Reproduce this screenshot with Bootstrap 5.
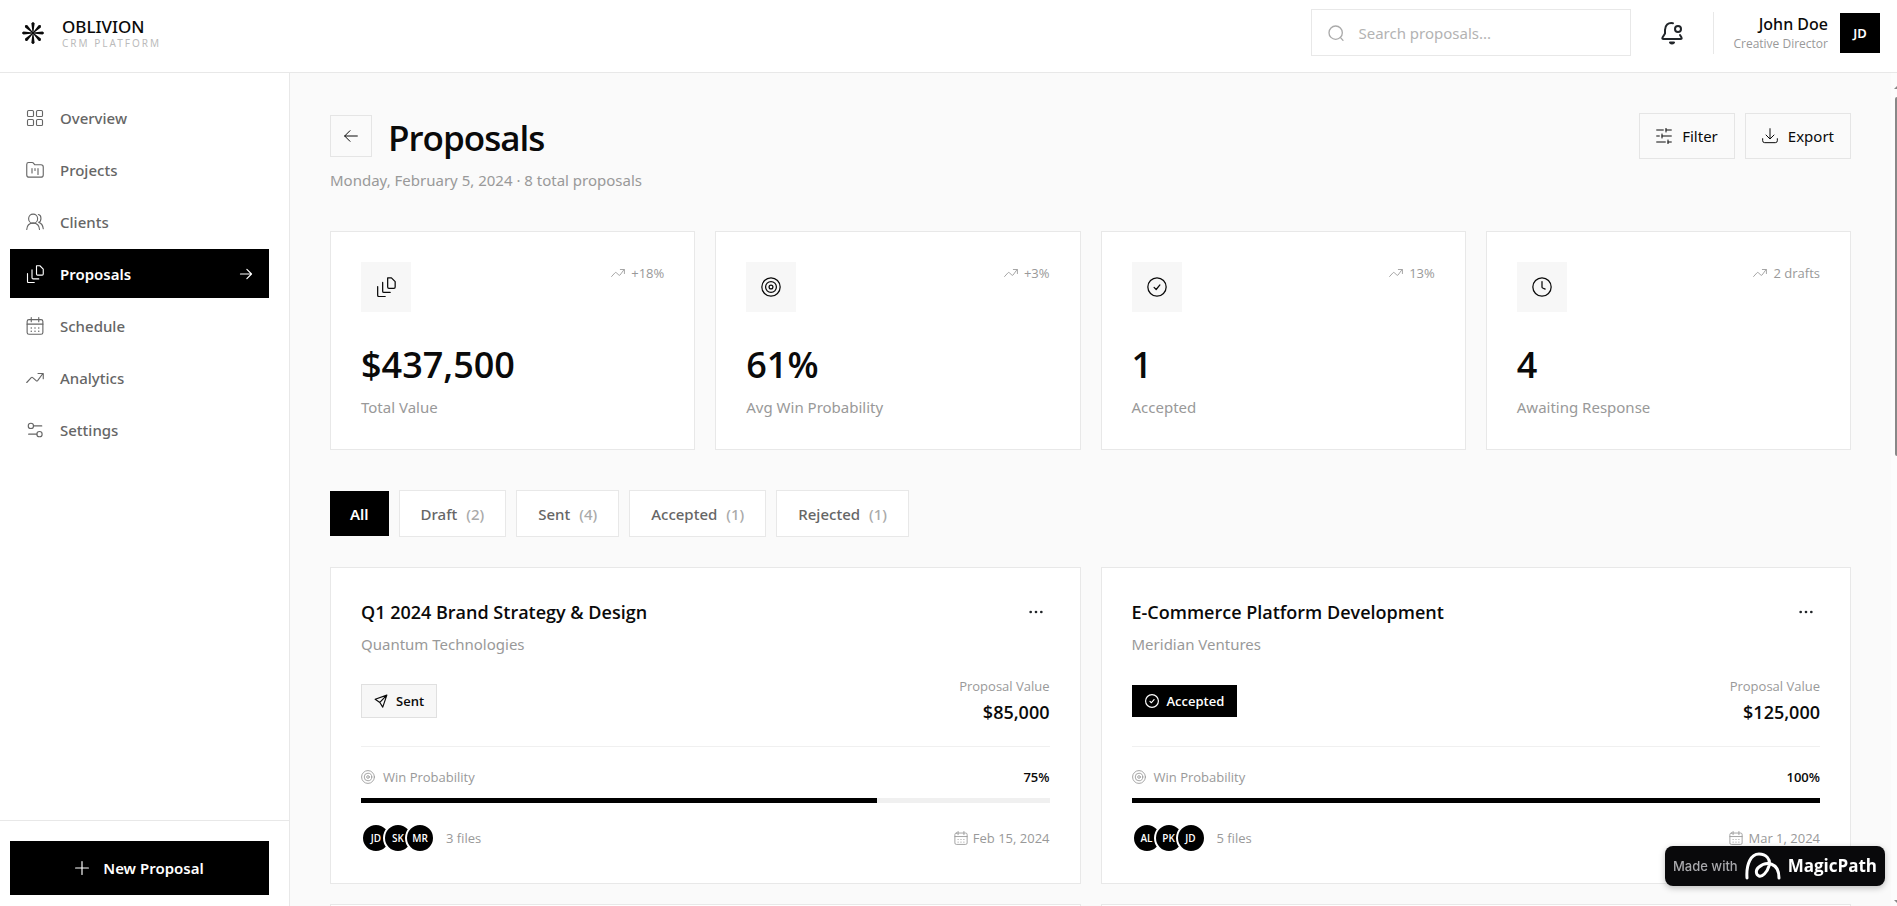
<!DOCTYPE html>
<html lang="en">
<head>
<meta charset="utf-8">
<meta name="viewport" content="width=device-width, initial-scale=1">
<title>Oblivion CRM – Proposals</title>
<link href="https://cdn.jsdelivr.net/npm/bootstrap@5.3.0/dist/css/bootstrap.min.css" rel="stylesheet">
<style>
  :root { --line: #e8e8e8; --soft: #f7f7f7; --muted: #999; --dim: #666; --ink: #0a0a0a; }
  body { font-family: "Noto Sans", "Open Sans", sans-serif; font-size: 15px; line-height: 24px; color: var(--ink); background: #fff; }
  svg { fill: none; stroke: currentColor; stroke-width: 1.5; stroke-linecap: round; stroke-linejoin: round; flex-shrink: 0; }
  .btn { --bs-btn-border-radius: 0; --bs-btn-font-size: 15px; --bs-btn-line-height: 24px; }
  .i14 { width: 14px; height: 14px; } .i16 { width: 16px; height: 16px; } .i18 { width: 18px; height: 18px; }
  .i20 { width: 20px; height: 20px; } .i24 { width: 24px; height: 24px; }
  .bold-line { stroke-width: 2; }
  .txt-muted { color: var(--muted); }
  .txt-small { font-family: "Open Sans", sans-serif; font-size: 13px; line-height: 20px; }
  .topbar { border-bottom: 1px solid var(--line); padding: 9px 17px 16px 21px; }
  .brand { color: inherit; text-decoration: none; gap: 17px; }
  .brand-name { font-size: 17px; line-height: 20px; font-weight: 500; }
  .brand-sub { font-size: 10px; line-height: 12px; letter-spacing: 2px; color: #bbb; }
  .search-box { width: 320px; height: 47px; border: 1px solid var(--line); padding: 0 16px; gap: 12px; color: #aaa; }
  .search-box input { border: 0; outline: 0; background: none; min-width: 0; }
  .search-box input::placeholder { color: #b3b3b3; }
  .btn-bell { width: 40px; height: 40px; margin: 0 21px; padding: 0; border: 0; }
  .user-area { border-left: 1px solid var(--line); padding-left: 19px; height: 42px; gap: 12px; }
  .user-name { font-size: 16px; line-height: 22px; font-weight: 500; }
  .user-role { font-family: "Open Sans", sans-serif; font-size: 12px; line-height: 18px; }
  .user-pic { width: 40px; height: 40px; background: #000; color: #fff; font-size: 13px; font-weight: 600; }
  .side { width: 290px; border-right: 1px solid var(--line); }
  .side-nav { padding: 20px 20px 0 10px; gap: 3px; }
  .side-link { height: 49px; padding: 0 16px; gap: 16px; color: var(--dim); font-weight: 500; text-decoration: none; }
  .side-link.active { background: #000; color: #fff; font-weight: 600; }
  .side-foot { border-top: 1px solid var(--line); padding: 20px 20px 11px 10px; }
  .btn-new, .btn-new:hover { height: 54px; background: #000; color: #fff; font-weight: 600; gap: 14px; }
  .page { background: #fafafa; padding: 40px 40px 0; }
  .track { width: 6px; background: #fcfcfc; padding: 13px 0 3px 3px; color: #888; }
  .track svg { stroke: none; fill: currentColor; }
  .thumb { height: 359px; width: 2px; margin: 8px 0 auto 1px; background: #888; border-radius: 2px 0 0 2px; }
  .btn-line { border: 1px solid #e5e5e5; color: var(--ink); background: #fafafa; height: 46px; padding: 0 16px; gap: 10px; }
  .btn-back { width: 42px; height: 42px; padding: 0; margin-top: 2px; }
  .gap-ten { gap: 10px; }
  h1, .figure-num, .deal h2, .deal-value { font-family: "Open Sans", sans-serif; font-weight: 600; }
  h1 { font-size: 35px; line-height: 50px; letter-spacing: -1px; }
  .page-sub { margin: 5px 0 0; }
  .panel { background: #fff; border: 1px solid var(--line); padding: 30px; }
  .grid-stats { display: grid; grid-template-columns: repeat(4, 1fr); gap: 20px; margin: 39px 0 40px; }
  .grid-cards { display: grid; grid-template-columns: 1fr 1fr; gap: 20px; margin-top: 30px; }
  .tile { width: 50px; height: 50px; background: var(--soft); }
  .trend { gap: 6px; margin-top: 1px; }
  .figure-num { font-size: 36px; line-height: 44px; margin: 31px 0 8px; }
  .tab { height: 47px; padding: 0 21px; border: 1px solid var(--line); background: #fff; color: var(--dim); font-weight: 500; gap: 9px; }
  .tab.active { background: #000; color: #fff; border: 0; height: 45px; padding: 0 20px; font-weight: 600; }
  .tab span { color: #aaa; }
  .deal h2 { font-size: 18px; line-height: 28px; margin: 0 0 6px; }
  .btn-more { padding: 0; width: 28px; height: 28px; border: 0; }
  .status { font-family: "Open Sans", sans-serif; font-size: 13px; line-height: 20px; font-weight: 600; gap: 8px; padding: 6px 12px; border: 1px solid #e0e0e0; background: var(--soft); }
  .status.done { background: #000; color: #fff; border-color: #000; padding: 5px 12px; }
  .deal-value { font-size: 18px; line-height: 26px; margin-top: 3px; }
  .deal-mid { padding: 20px 0 21px; border-bottom: 1px solid #f0f0f0; margin-bottom: 20px; }
  .meter { height: 5px; background: #f0f0f0; border-radius: 0; margin: 11px 0 20px; }
  .meter .progress-bar { background: #000; }
  .face { width: 30px; height: 30px; border: 2px solid #fff; border-radius: 50%; background: #000; color: #fff; font-size: 10px; font-weight: 600; }
  .face + .face { margin-left: -8px; }
  .files-count { margin-left: 11px; }
  .due { gap: 5px; }
  .made { position: fixed; right: 12px; bottom: 20px; height: 40px; border-radius: 8px; background: #09090b; color: #fff; text-decoration: none; padding: 0 8px; gap: 7px; box-shadow: 0 2px 6px rgba(0,0,0,.25); }
  .made svg { stroke-width: 3; }
  .made-with { font-family: Inter, sans-serif; font-size: 13px; font-weight: 500; color: #a8a8ac; }
  .made-name { font-family: "Open Sans", sans-serif; font-size: 17px; font-weight: 700; }
</style>
</head>
<body class="vh-100 overflow-hidden d-flex flex-column">
<svg class="d-none" xmlns="http://www.w3.org/2000/svg">
  <symbol id="grid" viewBox="0 0 24 24"><rect x="2" y="2" width="8" height="8" rx="1.500"/><rect x="14" y="2" width="8" height="8" rx="1.500"/><rect x="2" y="14" width="8" height="8" rx="1.500"/><rect x="14" y="14" width="8" height="8" rx="1.500"/></symbol>
  <symbol id="folder" viewBox="0 0 24 24"><path d="M1 4.500Q1 2 3.500 2H8q1.500 0 2.500 1.500L11.500 5H20q3 0 3 3v10.500q0 3-3 3H4q-3 0-3-3zM8 10v6M12 10v2.500M16 10v8"/></symbol>
  <symbol id="users" viewBox="0 0 24 24"><circle cx="9.500" cy="7.500" r="6"/><path d="M1 22c.3-5 3.500-8.500 8.500-8.500S17.700 17 18 22M16.500 2c4.500 1 4.500 8.500.5 10.500 3.500 1 5.500 4 6 8.500"/></symbol>
  <symbol id="files" viewBox="0 0 24 24"><path d="M14 1h4.500L23 5.500V12q0 1.500-1.500 1.500h-6Q14 13.500 14 12zM8 6.500V17q0 1.500 1.500 1.500H17M2 11.500V22q0 1.500 1.500 1.500H11"/></symbol>
  <symbol id="calendar" viewBox="0 0 24 24"><rect x="1.500" y="3.500" width="21" height="19.500" rx="2.500"/><path d="M1.500 9.500h21M7 .8v5.500M17 .8v5.500"/><path stroke-width="2" d="M7 14.500h.01M12 14.500h.01M17 14.500h.01M7 19h.01M12 19h.01M17 19h.01"/></symbol>
  <symbol id="trend" viewBox="0 0 24 24"><path d="M1 18l6-6.500q1-1 2 0l4.500 4q1 1 2 0L22.500 6M16 6h7v7"/></symbol>
  <symbol id="sliders" viewBox="0 0 24 24"><circle cx="6.500" cy="6.500" r="3.500"/><circle cx="18" cy="17.500" r="3.500"/><path d="M10 6.500h11M3.500 17.500h11"/></symbol>
  <symbol id="right" viewBox="0 0 24 24"><path d="M2.500 12h19M13.500 4l8 8-8 8"/></symbol>
  <symbol id="left" viewBox="0 0 24 24"><path d="M21.500 12h-19M10.500 4l-8 8 8 8"/></symbol>
  <symbol id="target" viewBox="0 0 24 24"><circle cx="12" cy="12" r="11"/><circle cx="12" cy="12" r="6.500"/><circle cx="12" cy="12" r="2.300"/></symbol>
  <symbol id="check" viewBox="0 0 24 24"><circle cx="12" cy="12" r="11"/><path d="M8.500 12.500l2.500 2.500 4.500-5.500"/></symbol>
  <symbol id="clock" viewBox="0 0 24 24"><circle cx="12" cy="12" r="11"/><path d="M12 5.500V12q0 .8.800 1.200l3 1.300"/></symbol>
  <symbol id="filter" viewBox="0 0 24 24"><path d="M1 3h10M15 3h8M15 0v6M1 12h4M9 12h14M9 9v6M1 21h13M18 21h5M18 18v6"/></symbol>
  <symbol id="download" viewBox="0 0 24 24"><path d="M12 1v15M6 10.500l6 6 6-6M1 16v3q0 3 3 3h16q3 0 3-3v-3"/></symbol>
  <symbol id="plane" viewBox="0 0 24 24"><path d="M22 2L2 9l8 5.500 5 8zM22 2l-12 12.500"/></symbol>
  <symbol id="search" viewBox="0 0 24 24"><circle cx="11.500" cy="11.500" r="10"/><path d="M18.500 18.500l4 4.500"/></symbol>
  <symbol id="dots" viewBox="0 0 24 24"><g fill="currentColor" stroke="none"><circle cx="4" cy="12" r="2"/><circle cx="12" cy="12" r="2"/><circle cx="20" cy="12" r="2"/></g></symbol>
  <symbol id="bell" viewBox="0 0 24 24"><path d="M13 2.200C8 1.200 5 4.500 5 9v3.500L2.500 16.500q-.6 1.500 1 1.500h17q1.600 0 1-1.500L20 14"/><circle cx="18" cy="8" r="3"/><path d="M10 21.500q2 2 4 0z"/></symbol>
  <symbol id="plus" viewBox="0 0 24 24"><path d="M12 1v22M1 12h22"/></symbol>
</svg>

<header class="topbar d-flex align-items-center">
  <a href="#" class="brand d-flex align-items-center">
    <svg class="i24" viewBox="-12 -12 24 24" aria-hidden="true"><g fill="currentColor" stroke="none">
      <path id="ray" d="M-.4 0L-1.600-9.500Q0-12.500 1.600-9.500L.4 0z"/>
      <use href="#ray" transform="rotate(45)"/><use href="#ray" transform="rotate(90)"/><use href="#ray" transform="rotate(135)"/><use href="#ray" transform="rotate(180)"/><use href="#ray" transform="rotate(225)"/><use href="#ray" transform="rotate(270)"/><use href="#ray" transform="rotate(315)"/></g></svg>
    <span><span class="brand-name d-block">OBLIVION</span><span class="brand-sub d-block">CRM PLATFORM</span></span>
  </a>
  <div class="d-flex align-items-center ms-auto">
    <label class="search-box d-flex align-items-center"><svg class="i16 bold-line" aria-hidden="true"><use href="#search"/></svg><input class="flex-grow-1" type="search" placeholder="Search proposals..." aria-label="Search proposals"></label>
    <button class="btn btn-bell d-flex align-items-center justify-content-center" aria-label="Notifications"><svg class="i24 bold-line"><use href="#bell"/></svg></button>
    <div class="user-area d-flex align-items-center">
      <div class="text-end"><div class="user-name">John Doe</div><div class="user-role txt-muted">Creative Director</div></div>
      <div class="user-pic d-flex align-items-center justify-content-center">JD</div>
    </div>
  </div>
</header>

<div class="d-flex flex-grow-1 overflow-hidden">
  <aside class="side d-flex flex-column flex-shrink-0">
    <nav class="side-nav d-flex flex-column flex-grow-1">
      <a href="#" class="side-link d-flex align-items-center"><svg class="i18"><use href="#grid"/></svg>Overview</a>
      <a href="#" class="side-link d-flex align-items-center"><svg class="i18"><use href="#folder"/></svg>Projects</a>
      <a href="#" class="side-link d-flex align-items-center"><svg class="i18"><use href="#users"/></svg>Clients</a>
      <a href="#" class="side-link active d-flex align-items-center" aria-current="page"><svg class="i18"><use href="#files"/></svg>Proposals<svg class="i14 ms-auto bold-line"><use href="#right"/></svg></a>
      <a href="#" class="side-link d-flex align-items-center"><svg class="i18"><use href="#calendar"/></svg>Schedule</a>
      <a href="#" class="side-link d-flex align-items-center"><svg class="i18"><use href="#trend"/></svg>Analytics</a>
      <a href="#" class="side-link d-flex align-items-center"><svg class="i18"><use href="#sliders"/></svg>Settings</a>
    </nav>
    <div class="side-foot"><button class="btn btn-new w-100 d-flex align-items-center justify-content-center"><svg class="i14 bold-line"><use href="#plus"/></svg>New Proposal</button></div>
  </aside>

  <main class="page flex-grow-1 overflow-hidden">
    <div class="d-flex justify-content-between align-items-start">
      <div>
        <div class="d-flex align-items-start gap-3"><button class="btn btn-line btn-back d-flex align-items-center justify-content-center" aria-label="Back"><svg class="i16"><use href="#left"/></svg></button><h1 class="m-0">Proposals</h1></div>
        <p class="page-sub txt-muted">Monday, February 5, 2024 · 8 total proposals</p>
      </div>
      <div class="d-flex gap-ten">
        <button class="btn btn-line d-flex align-items-center"><svg class="i16"><use href="#filter"/></svg>Filter</button>
        <button class="btn btn-line d-flex align-items-center"><svg class="i16"><use href="#download"/></svg>Export</button>
      </div>
    </div>

    <section class="grid-stats">
      <div class="panel"><div class="d-flex justify-content-between align-items-start"><div class="tile d-flex align-items-center justify-content-center"><svg class="i20"><use href="#files"/></svg></div><div class="trend txt-small txt-muted d-flex align-items-center"><svg class="i14"><use href="#trend"/></svg>+18%</div></div><div class="figure-num">$437,500</div><div class="txt-muted">Total Value</div></div>
      <div class="panel"><div class="d-flex justify-content-between align-items-start"><div class="tile d-flex align-items-center justify-content-center"><svg class="i20"><use href="#target"/></svg></div><div class="trend txt-small txt-muted d-flex align-items-center"><svg class="i14"><use href="#trend"/></svg>+3%</div></div><div class="figure-num">61%</div><div class="txt-muted">Avg Win Probability</div></div>
      <div class="panel"><div class="d-flex justify-content-between align-items-start"><div class="tile d-flex align-items-center justify-content-center"><svg class="i20"><use href="#check"/></svg></div><div class="trend txt-small txt-muted d-flex align-items-center"><svg class="i14"><use href="#trend"/></svg>13%</div></div><div class="figure-num">1</div><div class="txt-muted">Accepted</div></div>
      <div class="panel"><div class="d-flex justify-content-between align-items-start"><div class="tile d-flex align-items-center justify-content-center"><svg class="i20"><use href="#clock"/></svg></div><div class="trend txt-small txt-muted d-flex align-items-center"><svg class="i14"><use href="#trend"/></svg>2 drafts</div></div><div class="figure-num">4</div><div class="txt-muted">Awaiting Response</div></div>
    </section>

    <div class="d-flex align-items-center gap-ten">
      <button class="btn tab active d-flex align-items-center">All</button>
      <button class="btn tab d-flex align-items-center">Draft <span>(2)</span></button>
      <button class="btn tab d-flex align-items-center">Sent <span>(4)</span></button>
      <button class="btn tab d-flex align-items-center">Accepted <span>(1)</span></button>
      <button class="btn tab d-flex align-items-center">Rejected <span>(1)</span></button>
    </div>

    <section class="grid-cards">
      <article class="panel deal">
        <div class="d-flex justify-content-between align-items-start"><div><h2>Q1 2024 Brand Strategy &amp; Design</h2><div class="txt-muted">Quantum Technologies</div></div><button class="btn btn-more d-flex align-items-center justify-content-center" aria-label="More"><svg class="i16"><use href="#dots"/></svg></button></div>
        <div class="deal-mid d-flex justify-content-between align-items-center"><div class="status d-flex align-items-center"><svg class="i14 bold-line"><use href="#plane"/></svg>Sent</div><div class="text-end"><div class="txt-small txt-muted">Proposal Value</div><div class="deal-value">$85,000</div></div></div>
        <div class="txt-small d-flex justify-content-between"><span class="txt-muted d-flex align-items-center gap-2"><svg class="i14"><use href="#target"/></svg>Win Probability</span><span class="fw-semibold">75%</span></div>
        <div class="progress meter" role="progressbar" aria-label="Win probability" aria-valuenow="75" aria-valuemin="0" aria-valuemax="100"><div class="progress-bar" style="width:75%"></div></div>
        <div class="d-flex align-items-center txt-small txt-muted"><span class="face d-flex align-items-center justify-content-center">JD</span><span class="face d-flex align-items-center justify-content-center">SK</span><span class="face d-flex align-items-center justify-content-center">MR</span><span class="files-count">3 files</span><span class="ms-auto d-flex align-items-center due"><svg class="i14"><use href="#calendar"/></svg>Feb 15, 2024</span></div>
      </article>
      <article class="panel deal">
        <div class="d-flex justify-content-between align-items-start"><div><h2>E-Commerce Platform Development</h2><div class="txt-muted">Meridian Ventures</div></div><button class="btn btn-more d-flex align-items-center justify-content-center" aria-label="More"><svg class="i16"><use href="#dots"/></svg></button></div>
        <div class="deal-mid d-flex justify-content-between align-items-center"><div class="status done d-flex align-items-center"><svg class="i14 bold-line"><use href="#check"/></svg>Accepted</div><div class="text-end"><div class="txt-small txt-muted">Proposal Value</div><div class="deal-value">$125,000</div></div></div>
        <div class="txt-small d-flex justify-content-between"><span class="txt-muted d-flex align-items-center gap-2"><svg class="i14"><use href="#target"/></svg>Win Probability</span><span class="fw-semibold">100%</span></div>
        <div class="progress meter" role="progressbar" aria-label="Win probability" aria-valuenow="100" aria-valuemin="0" aria-valuemax="100"><div class="progress-bar" style="width:100%"></div></div>
        <div class="d-flex align-items-center txt-small txt-muted"><span class="face d-flex align-items-center justify-content-center">AL</span><span class="face d-flex align-items-center justify-content-center">PK</span><span class="face d-flex align-items-center justify-content-center">JD</span><span class="files-count">5 files</span><span class="ms-auto d-flex align-items-center due"><svg class="i14"><use href="#calendar"/></svg>Mar 1, 2024</span></div>
      </article>
      <article class="panel deal"></article>
      <article class="panel deal"></article>
    </section>
  </main>
  <div class="track d-flex flex-column flex-shrink-0" aria-hidden="true">
    <svg width="3" height="3" viewBox="0 0 3 3"><path d="M0 3L3 0v3z"/></svg>
    <div class="thumb"></div>
    <svg width="3" height="3" viewBox="0 0 3 3"><path d="M0 0h3v3z"/></svg>
  </div>
</div>

<a class="made d-flex align-items-center" href="#"><span class="made-with">Made with</span>
  <svg width="36" height="28" viewBox="0 0 36 28"><path d="M2 26C1 12 6 2 14 2c7 0 12 5 10 12-2 7-7 11-10 10s-4-6 0-9c7-6 20-5 20 11"/></svg>
  <span class="made-name">MagicPath</span></a>
<script src="https://cdn.jsdelivr.net/npm/bootstrap@5.3.0/dist/js/bootstrap.bundle.min.js"></script>
</body>
</html>
